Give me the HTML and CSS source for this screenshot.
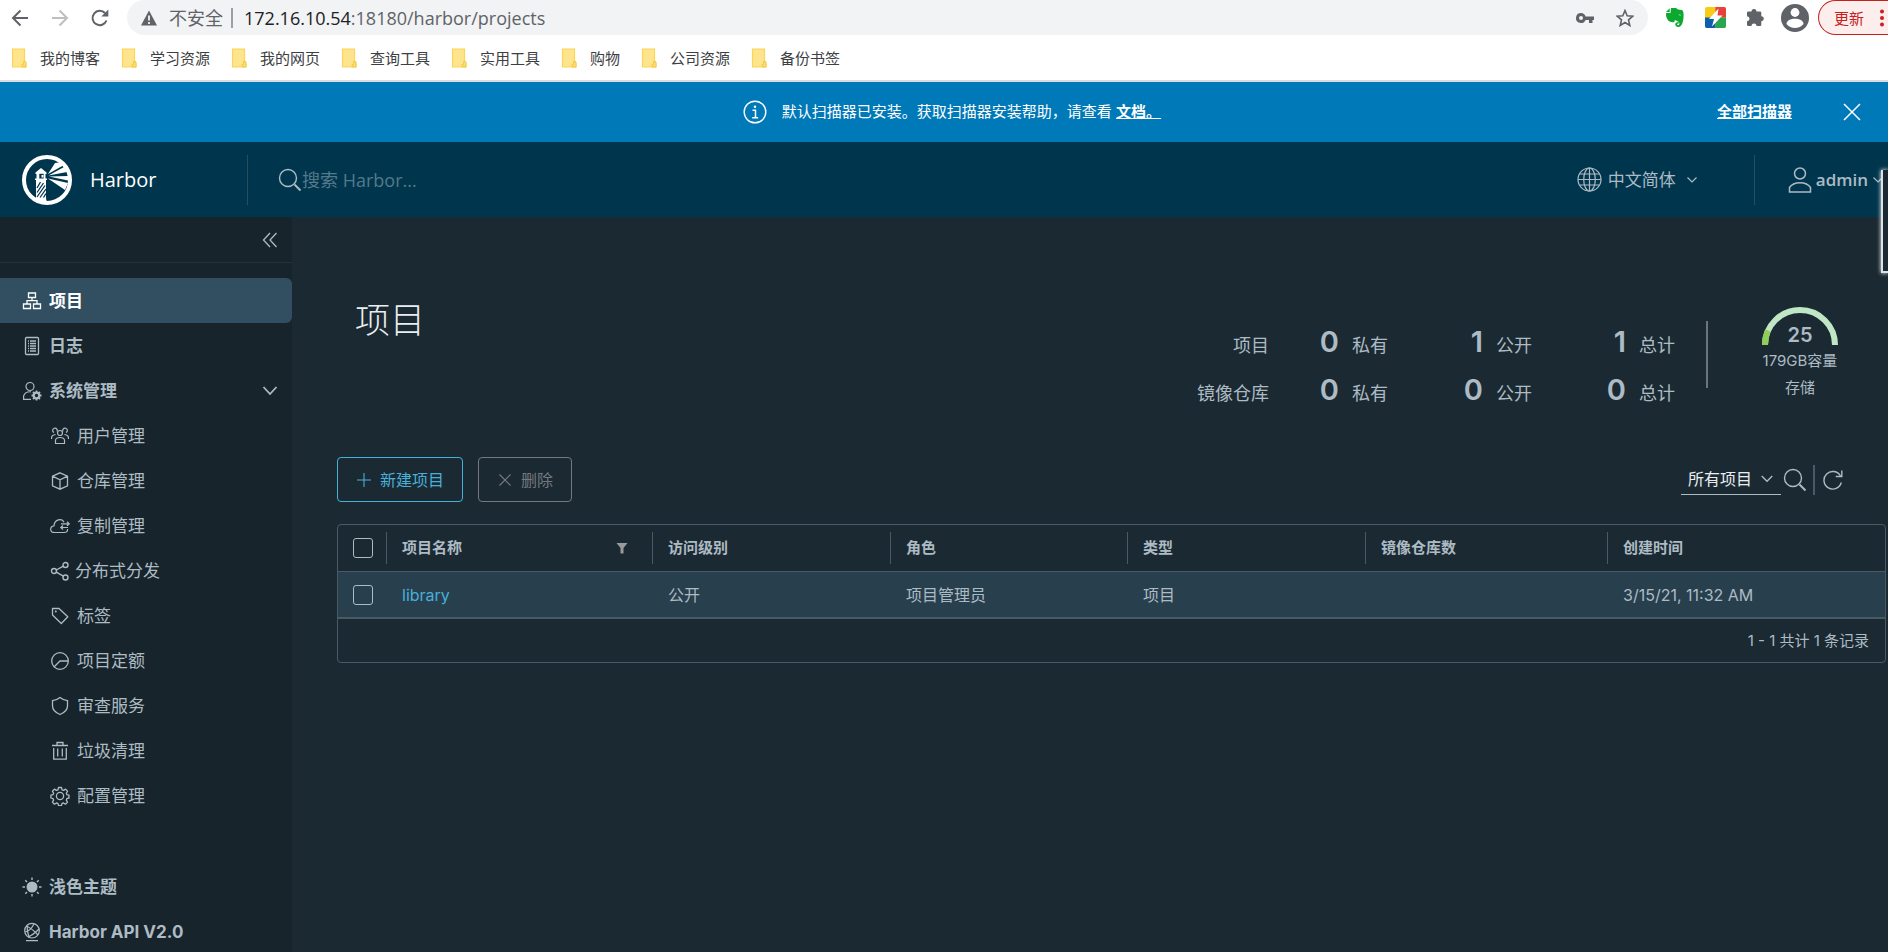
FILE: index.html
```html
<!DOCTYPE html>
<html lang="zh-CN">
<head>
<meta charset="utf-8">
<title>Harbor</title>
<link rel="stylesheet" href="styles.css">
</head>
<body>
<svg class="defs" width="0" height="0">
  <defs>
    <symbol id="folder" viewBox="0 0 16 20"><path d="M1.500 1h12v14.500h1.500v3.500h-13.500z" fill="#ffe48e" stroke="#fbd558" stroke-width="1.200"/><path d="M12.500 13.500h2.500v5.500h-4v-2.500h1.500z" fill="#fbdc6f" stroke="#f2c63c" stroke-width=".8"/></symbol>
    <symbol id="caret" viewBox="0 0 12 12"><path d="M1.500 3.500 6 8l4.500-4.500" fill="none" stroke="currentColor" stroke-width="1.200"/></symbol>
    <symbol id="search" viewBox="0 0 24 24"><circle cx="10" cy="10" r="8.500" fill="none" stroke="currentColor" stroke-width="1.400"/><path d="m16.500 16.500 6 6" stroke="currentColor" stroke-width="2"/></symbol>
  </defs>
</svg>

<header class="browser">
  <div class="address-row">
    <button class="nav-btn" aria-label="后退"><svg width="18" height="18" viewBox="0 0 18 18"><path d="M17 9H3M9.500 1.500 2 9l7.500 7.500" fill="none" stroke="#5f6368" stroke-width="2"/></svg></button>
    <button class="nav-btn" aria-label="前进"><svg width="18" height="18" viewBox="0 0 18 18"><path d="M1 9h14M8.500 1.500 16 9l-7.500 7.500" fill="none" stroke="#bdbfc2" stroke-width="2"/></svg></button>
    <button class="nav-btn" aria-label="刷新"><svg width="20" height="20" viewBox="0 0 20 20"><path d="M16.500 12.500A7.200 7.200 0 1 1 15 5" fill="none" stroke="#5f6368" stroke-width="2"/><path d="M18.300 1.500v7h-7z" fill="#5f6368"/></svg></button>
    <div class="omnibox">
      <svg width="16" height="16" viewBox="0 0 16 16"><path d="M8 .5 16 15.500H0z" fill="#5f6368"/><path d="M8 5.500v5M8 12v2" stroke="#f1f3f4" stroke-width="1.800"/></svg>
      <span class="insecure">不安全</span>
      <span class="url"><b>172.16.10.54</b>:18180/harbor/projects</span>
      <svg class="key" width="18" height="12" viewBox="0 0 18 12"><path d="M5 1a5 5 0 1 0 4.600 7H13v3h3.500V8H18V4.500H9.600A5 5 0 0 0 5 1zm0 3a2 2 0 1 1 0 4 2 2 0 0 1 0-4z" fill="#5f6368" fill-rule="evenodd"/></svg>
      <svg width="18" height="18" viewBox="0 0 18 18"><path d="m9 1.500 2.200 5.200 5.600.5-4.300 3.700 1.300 5.600L9 13.500l-4.800 3 1.300-5.600L1.200 7.200l5.600-.5z" fill="none" stroke="#5f6368" stroke-width="1.600"/></svg>
    </div>
    <div class="extensions">
      <svg width="20" height="21" viewBox="0 0 20 21"><path d="M6 1h5l2 1.500 4 .5c1.500 1 1.800 4 1.500 7.500-.3 4.500-1.500 9-5 9.500-2.500 0-3.500-1.500-3.200-3 .3-1.700 2-2 3.700-1.700l-.2 1.300c-1 0-1.700.2-1.600 1 0 .7 1 .8 1.600.5 1-.7.8-3-.8-3.600L10 13l-.8 2C5 16 2 13.500 1 8.500L1.200 6H5.500z" fill="#0da82f"/><path d="M1 5 4.700 1.300V5z" fill="#0da82f"/><path d="M13.500 8q1.500-1.300 2.600.6z" fill="#fff"/></svg>
      <svg width="21" height="21" viewBox="0 0 21 21"><rect width="21" height="21" rx="2" fill="#f8cb16"/><path d="M10.500 0H19q2 0 2 2v8.500H10.500z" fill="#e8413c"/><path d="M0 10.500h10.500V21H2q-2 0-2-2z" fill="#0c5fad"/><path d="M10.500 10.500H21V19q0 2-2 2h-8.500z" fill="#2aa650"/><path d="M13.500 1.500 4 12h5L7 19.500 17.500 8.500h-5z" fill="#fff"/></svg>
      <svg width="19" height="19" viewBox="0 0 19 19"><path d="M5.500 3.500a2.500 2.500 0 0 1 5 0H14a1.300 1.300 0 0 1 1.300 1.300v3.400a2.500 2.500 0 0 1 0 5v3.500A1.300 1.300 0 0 1 14 18h-3.500a2.500 2.500 0 0 0-5 0H2.300A1.300 1.300 0 0 1 1 16.700v-3.500a2.500 2.500 0 0 0 0-5V4.800a1.300 1.300 0 0 1 1.300-1.300z" fill="#5f6368"/></svg>
      <svg width="28" height="28" viewBox="0 0 28 28"><circle cx="14" cy="14" r="14" fill="#5f6368"/><circle cx="14" cy="8.500" r="4.400" fill="#fff"/><path d="M5.500 20c0-7 17-7 17 0a11 11 0 0 1-17 0z" fill="#fff"/></svg>
    </div>
    <button class="update"><span>更新</span><svg width="4" height="18" viewBox="0 0 4 18"><g fill="#c5221f"><circle cx="2" cy="2.500" r="2"/><circle cx="2" cy="9" r="2"/><circle cx="2" cy="15.500" r="2"/></g></svg></button>
  </div>
  <nav class="bookmarks">
    <a href="#"><svg width="16" height="20"><use href="#folder"/></svg>我的博客</a>
    <a href="#"><svg width="16" height="20"><use href="#folder"/></svg>学习资源</a>
    <a href="#"><svg width="16" height="20"><use href="#folder"/></svg>我的网页</a>
    <a href="#"><svg width="16" height="20"><use href="#folder"/></svg>查询工具</a>
    <a href="#"><svg width="16" height="20"><use href="#folder"/></svg>实用工具</a>
    <a href="#"><svg width="16" height="20"><use href="#folder"/></svg>购物</a>
    <a href="#"><svg width="16" height="20"><use href="#folder"/></svg>公司资源</a>
    <a href="#"><svg width="16" height="20"><use href="#folder"/></svg>备份书签</a>
  </nav>
</header>

<div class="alert">
  <div class="alert-text">
    <svg width="24" height="24" viewBox="0 0 24 24"><circle cx="12" cy="12" r="10.800" fill="none" stroke="#fff" stroke-width="1.400"/><circle cx="12" cy="6.700" r="1.200" fill="#fff"/><path d="M9.500 10.300H12.500v7.200M9.200 17.700h6" fill="none" stroke="#fff" stroke-width="1.500"/></svg>
    <p>默认扫描器已安装。获取扫描器安装帮助，请查看 <a href="#">文档。</a></p>
  </div>
  <a class="alert-link" href="#">全部扫描器</a>
  <button class="alert-close" aria-label="关闭"><svg width="18" height="18" viewBox="0 0 18 18"><path d="m1 1 16 16M17 1 1 17" stroke="#fff" stroke-width="1.500"/></svg></button>
</div>

<header class="app-header">
  <a class="brand" href="#">
    <svg width="50" height="50" viewBox="0 0 50 50"><circle cx="25" cy="25" r="23" fill="none" stroke="#fff" stroke-width="4"/><path d="M14 47V25h-1v-1.500h1.500V19h-1v-1.500L19 13l5.500 4.500V19h-1v4.500H25V25h-1v17q-.5 3 2 5.500Q19 49 14 47z" fill="#fff"/><path d="M17.300 18.800h4.400v4.700h-4.400z" fill="#00364d"/><path d="M19.500 20h2v2.500h-2z" fill="#fff"/><path d="m15 33 3.500-6M15 37.500 21.500 28M15 42l8-11.500M18 42.500 24 34M21.500 42.500 24 38.500" stroke="#00364d" stroke-width="1.300"/><path d="M26 19 33 8l7-1 2 3zM26.500 20.500 42 12l3 5zM27 21.500l19-.5v4.500zM26 23.500 46 28l-3 7z" fill="#fff"/></svg>
    <span>Harbor</span>
  </a>
  <label class="search"><svg width="24" height="24"><use href="#search"/></svg><input type="search" placeholder="搜索 Harbor..." aria-label="搜索 Harbor"></label>
  <button class="language"><svg width="25" height="25" viewBox="0 0 25 25"><g fill="none" stroke="currentColor" stroke-width="1.200"><circle cx="12.500" cy="12.500" r="11.500"/><ellipse cx="12.500" cy="12.500" rx="5.800" ry="11.500"/><path d="M12.500 1v23M1 12.500h23M2.800 7h19.400M2.800 18h19.400"/></g></svg><span>中文简体</span><svg class="caret" width="12" height="12"><use href="#caret"/></svg></button>
  <button class="user"><svg width="24" height="26" viewBox="0 0 24 26"><g fill="none" stroke="currentColor" stroke-width="1.500"><circle cx="12" cy="6.500" r="5.500"/><path d="M1.500 25v-4.500c4-6.500 17-6.500 21 0V25z"/></g></svg><span>admin</span><svg width="12" height="12"><use href="#caret"/></svg></button>
</header>

<div class="layout">
  <aside class="sidebar">
    <button class="collapse" aria-label="收起"><svg width="16" height="16" viewBox="0 0 16 16"><path d="M8 1 1.500 8 8 15M14.500 1 8 8l6.500 7" fill="none" stroke="currentColor" stroke-width="1.300"/></svg></button>
    <nav class="menu">
      <a class="item active" href="#"><svg width="20" height="20" viewBox="0 0 20 20"><g fill="none" stroke="currentColor" stroke-width="1.300"><path d="M6.500 2h7v4.500h-7zM1.500 13h7v4.500h-7zM11.500 13h7v4.500h-7zM10 6.500v3M5 13V9.700h10V13"/></g></svg>项目</a>
      <a class="item" href="#"><svg width="20" height="20" viewBox="0 0 20 20"><g fill="none" stroke="currentColor" stroke-width="1.300"><rect x="3.500" y="1.500" width="13" height="17" rx="1"/><path d="M6 5h1M8 5h6M6 7.500h1M8 7.500h6M6 10h1M8 10h6M6 12.500h1M8 12.500h6M6 15h1M8 15h6"/></g></svg>日志</a>
      <button class="item" aria-expanded="true"><svg width="20" height="20" viewBox="0 0 20 20"><g fill="none" stroke="currentColor" stroke-width="1.200"><circle cx="8" cy="5.500" r="4"/><path d="M9 18.400H1.600V15c.8-3 4-4.400 7.400-4.200"/><circle cx="14.500" cy="14.500" r="2.800" stroke-width="2.200"/><path d="M14.500 9.500v2M14.500 17.500v2M9.500 14.500h2M17.500 14.500h2M11 11l1.400 1.400M16.600 16.600 18 18M18 11l-1.400 1.400M12.400 16.600 11 18" stroke-width="1.800"/></g></svg><span>系统管理</span><svg class="expand" width="16" height="16" viewBox="0 0 16 16"><path d="m1.500 4 6.500 7 6.500-7" fill="none" stroke="currentColor" stroke-width="1.800"/></svg></button>
      <a class="sub" href="#"><svg width="20" height="20" viewBox="0 0 20 20"><g fill="none" stroke="currentColor" stroke-width="1.200"><circle cx="10" cy="7" r="2.500"/><path d="M5.500 17.500V14q.5-2.500 4.500-2.500t4.500 2.500v3.500zM7 5.500A2.300 2.300 0 1 0 4 6.500M13 5.500a2.300 2.300 0 1 1 3 1M1.600 13v-2q.4-2 4-2.500M18.400 13v-2q-.4-2-4-2.500"/></g></svg>用户管理</a>
      <a class="sub" href="#"><svg width="20" height="20" viewBox="0 0 20 20"><path d="m10 1.800 7.500 3.400v9.600L10 18.200l-7.500-3.400V5.200zM2.500 5.200 10 8.800l7.500-3.600M10 8.800v9.400" fill="none" stroke="currentColor" stroke-width="1.300"/></svg>仓库管理</a>
      <a class="sub" href="#"><svg width="20" height="20" viewBox="0 0 20 20"><path d="M17.500 13q.5 3.500-3.500 3.500H4.500C-.5 16.500-.5 10.500 4 9.800 4.500 3 12 2 14 6.300M11 7.800h8M17 5.800l2.200 2-2.200 2M18 11.500h-7M13 9.500l-2.200 2 2.200 2" fill="none" stroke="currentColor" stroke-width="1.200"/></svg>复制管理</a>
      <a class="sub tight" href="#"><svg width="20" height="20" viewBox="0 0 20 20"><g fill="none" stroke="currentColor" stroke-width="1.400"><circle cx="4" cy="10" r="2.500"/><circle cx="15.500" cy="4" r="2.500"/><circle cx="15.500" cy="16.500" r="2.500"/><path d="m6.300 9 7-3.800M6.300 11.200l7 4"/></g></svg>分布式分发</a>
      <a class="sub" href="#"><svg width="20" height="20" viewBox="0 0 20 20"><path d="M2.500 2.500H9l8.800 8.300-6.500 6.700L2.500 9z" fill="none" stroke="currentColor" stroke-width="1.300" stroke-linejoin="round"/><circle cx="5.800" cy="5.500" r="1" fill="currentColor"/></svg>标签</a>
      <a class="sub" href="#"><svg width="20" height="20" viewBox="0 0 20 20"><g fill="none" stroke="currentColor" stroke-width="1.300"><circle cx="10" cy="10" r="8.300"/><path d="M18 10h-8l-6 6"/></g></svg>项目定额</a>
      <a class="sub" href="#"><svg width="20" height="20" viewBox="0 0 20 20"><path d="M10 1.500q3.500 2.800 7.500 3.200V10c0 4-3.500 6.800-7.500 8.500C6 16.800 2.500 14 2.500 10V4.700Q6.500 4.300 10 1.500z" fill="none" stroke="currentColor" stroke-width="1.300"/></svg>审查服务</a>
      <a class="sub" href="#"><svg width="20" height="20" viewBox="0 0 20 20"><path d="M2 4.500h16M7 4.500v-3h6v3M3.700 7v11.200h12.600V7M7.700 7.500v8M12.300 7.500v8" fill="none" stroke="currentColor" stroke-width="1.300"/></svg>垃圾清理</a>
      <a class="sub" href="#"><svg width="20" height="20" viewBox="0 0 20 20"><g fill="none" stroke="currentColor" stroke-width="1.300" stroke-linejoin="round"><circle cx="10" cy="10" r="3.600"/><path d="M8.500 1.500h3l.5 2.300 1.500.6 2.100-1.300 2 2.100-1.300 2.100.6 1.400 2.100.5v2.800l-2.200.6-.5 1.500 1.200 2-2 2.100-2.200-1.300-1.400.7-.5 2.100H8.600l-.6-2.100-1.400-.7-2.200 1.300-2-2.100 1.200-2-.6-1.500-2.100-.6V9.200l2.100-.5.7-1.400-1.300-2.100 2-2.100 2.100 1.300L8 3.800z"/></g></svg>配置管理</a>
    </nav>
    <div class="menu-bottom">
      <button class="item"><svg width="20" height="20" viewBox="0 0 20 20"><circle cx="10" cy="10" r="5.500" fill="currentColor"/><path d="M10 .5V3M10 17v2.500M.5 10H3M17 10h2.500M3.300 3.300 5 5M15 15l1.700 1.700M16.700 3.300 15 5M5 15l-1.700 1.700" stroke="currentColor" stroke-width="1.400"/></svg>浅色主题</button>
      <a class="item" href="#"><svg width="20" height="20" viewBox="0 0 20 20"><g fill="none" stroke="currentColor" stroke-width="1.200"><circle cx="10" cy="8.700" r="7.300"/><path d="M4 4.500q4 0 12 8.500M3 10q5-.5 9-8M6 15q5-2 11-8M5.500 4q-1 5 2 11.500M4 18.700h12"/></g></svg>Harbor API V2.0</a>
    </div>
  </aside>

  <main class="content">
    <section class="summary">
      <h1>项目</h1>
      <div class="stats">
        <dl class="counts">
          <dt>项目</dt><dd><b>0</b>私有</dd><dd><b>1</b>公开</dd><dd><b>1</b>总计</dd>
          <dt>镜像仓库</dt><dd><b>0</b>私有</dd><dd><b>0</b>公开</dd><dd><b>0</b>总计</dd>
        </dl>
        <div class="storage">
          <div class="gauge">
            <svg width="76" height="38" viewBox="0 0 76 38"><path d="M3 38a35 35 0 0 1 70 0" fill="none" stroke="#c1e6c6" stroke-width="6"/><path d="M3 38a35 35 0 0 1 3-14.500" fill="none" stroke="#8fce58" stroke-width="6"/></svg>
            <b>25</b>
          </div>
          <span>179GB容量</span>
          <span>存储</span>
        </div>
      </div>
    </section>

    <div class="toolbar">
      <button class="btn primary"><svg width="16" height="16" viewBox="0 0 16 16"><path d="M8 1v14M1 8h14" stroke="currentColor" stroke-width="1.100"/></svg>新建项目</button>
      <button class="btn" disabled><svg width="16" height="16" viewBox="0 0 16 16"><path d="m2.500 2.500 11 11M13.500 2.500l-11 11" stroke="currentColor" stroke-width="1.200"/></svg>删除</button>
      <div class="filters">
        <div class="select"><select aria-label="项目类型"><option>所有项目</option></select><svg width="14" height="14"><use href="#caret"/></svg></div>
        <button class="icon-btn" aria-label="搜索"><svg width="24" height="24"><use href="#search"/></svg></button>
        <button class="icon-btn refresh" aria-label="刷新"><svg width="20" height="20" viewBox="0 0 20 20"><path d="M18.300 12.500A8.800 8.800 0 1 1 17.500 6" fill="none" stroke="currentColor" stroke-width="1.400"/><path d="M18.800.5v6h-6" fill="none" stroke="currentColor" stroke-width="1.400"/></svg></button>
      </div>
    </div>

    <table class="grid">
      <colgroup><col class="c-check"><col class="c-name"><col class="c-access"><col class="c-role"><col class="c-type"><col class="c-repos"><col></colgroup>
      <thead>
        <tr>
          <th><input type="checkbox" aria-label="全选"></th>
          <th><div class="head">项目名称<svg width="12" height="12" viewBox="0 0 12 12"><path d="M.5 1h11L7.500 6v5.500h-3V6z" fill="#9a9a9a"/></svg></div></th>
          <th><div class="head">访问级别</div></th>
          <th><div class="head">角色</div></th>
          <th><div class="head">类型</div></th>
          <th><div class="head">镜像仓库数</div></th>
          <th><div class="head">创建时间</div></th>
        </tr>
      </thead>
      <tbody>
        <tr>
          <td><input type="checkbox" aria-label="选择 library"></td>
          <td><a href="#">library</a></td>
          <td>公开</td>
          <td>项目管理员</td>
          <td>项目</td>
          <td></td>
          <td>3/15/21, 11:32 AM</td>
        </tr>
      </tbody>
      <tfoot><tr><td colspan="7">1 - 1 共计 1 条记录</td></tr></tfoot>
    </table>
  </main>
</div>
<div class="edge-panel"></div>
</body>
</html>
```
FILE: styles.css
```css
* { box-sizing: border-box; }

body {
  margin: 0;
  min-height: 100vh;
  display: flex;
  flex-direction: column;
  overflow-x: hidden;
  background: #1b2a32;
  color: #adbbc4;
  font-family: Inter, "Noto Sans CJK SC", sans-serif;
  font-size: 16px;
  line-height: 24px;
}

button, input, select { font: inherit; color: inherit; }
button { padding: 0; border: 0; background: none; cursor: pointer; }
a { color: inherit; text-decoration: none; }
svg { display: block; flex: none; }
.defs { position: absolute; }

/* Browser bar */
.browser {
  background: #fff;
  border-bottom: 2px solid #dadce0;
  height: 82px;
  font-family: "Open Sans", "Noto Sans CJK SC", sans-serif;
  color: #3c4043;
}
.address-row { display: flex; align-items: center; height: 35px; }
.nav-btn { width: 40px; display: grid; place-items: center; }
.omnibox {
  flex: 1;
  display: flex;
  align-items: center;
  height: 35px;
  margin-left: 7px;
  padding: 0 14px;
  border-radius: 18px;
  background: #f1f3f4;
  color: #5f6368;
  font-size: 18px;
}
.insecure { margin-left: 12px; padding-right: 8px; border-right: 2px solid #9aa0a6; line-height: 20px; }
.url { flex: 1; margin-left: 11px; }
.url b { color: #202124; font-weight: 400; }
.key { margin-right: 22px; }
.extensions { display: flex; align-items: center; gap: 20px; margin-left: 17px; }
.extensions svg:last-child { margin-left: -4px; }
.update {
  display: flex;
  align-items: center;
  gap: 16px;
  height: 35px;
  width: 70px;
  padding-left: 15px;
  margin-left: 9px;
  border: 1px solid #c5221f;
  border-right: 0;
  border-radius: 18px 0 0 18px;
  background: #fceeed;
  color: #c5221f;
  font-size: 15px;
}
.bookmarks { display: flex; gap: 21px; padding: 11px; font-size: 15px; }
.bookmarks a { display: flex; align-items: center; gap: 13px; }

/* Alert */
.alert {
  display: flex;
  align-items: center;
  height: 60px;
  padding-right: 27px;
  background: #0079b8;
  color: #fff;
  font-size: 15px;
}
.alert-text { flex: 1; display: flex; align-items: center; justify-content: center; gap: 15px; padding-left: 187px; }
.alert p { margin: 0; }
.alert a { font-weight: 700; text-decoration: underline; }
.alert-link { margin-right: 51px; }

/* Application header */
.app-header {
  display: flex;
  align-items: center;
  height: 75px;
  background: #00364d;
  font-family: "Open Sans", "Noto Sans CJK SC", sans-serif;
}
.brand { display: flex; align-items: center; gap: 18px; width: 248px; height: 50px; padding-left: 22px; border-right: 1px solid #23505f; color: #fff; font-size: 20px; }
.search { flex: 1; display: flex; align-items: center; margin-left: 30px; color: #adbbc4; }
.search input { border: 0; padding: 0; background: none; outline: 0; width: 300px; font-size: 18px; }
.search input::placeholder { color: #55788a; opacity: 1; }
.language { display: flex; align-items: center; height: 50px; padding-right: 56px; border-right: 1px solid #23505f; font-size: 17px; }
.language span { margin: 0 10px 0 6px; }
.user { display: flex; align-items: center; gap: 4px; padding: 0 4px 0 33px; font-size: 17px; font-weight: 600; }

/* Sidebar */
.layout { flex: 1; display: flex; }
.sidebar { flex: none; width: 292px; background: #17242b; }
.collapse { display: flex; justify-content: flex-end; align-items: center; width: 100%; height: 46px; padding-right: 14px; border-bottom: 1px solid #24323a; }
.menu { padding-top: 15px; }
.menu-bottom { margin-top: 46px; }
.item, .sub { display: flex; align-items: center; height: 45px; width: 100%; font-size: 17px; }
.item { gap: 7px; padding: 0 14px 0 22px; font-weight: 700; }
.item.active { background: #324f61; color: #fff; border-radius: 0 6px 6px 0; }
.expand { margin-left: auto; }
.sub { gap: 7px; padding-left: 50px; }
.sub.tight { gap: 5px; }

/* Content */
.content { flex: 1; min-width: 0; padding: 64px 2px 0 45px; }
.summary { display: flex; justify-content: space-between; height: 176px; }
h1 { margin: 15px 0 0 18px; color: #eaedf0; font-size: 35px; font-weight: 300; line-height: 48px; }
.stats { display: flex; align-items: flex-start; padding-right: 48px; }
.counts {
  display: grid;
  grid-template-columns: 72px 119px 144px 143px;
  align-items: baseline;
  row-gap: 16px;
  margin: 49px 31px 0 0;
  font-size: 18px;
  line-height: 32px;
}
.counts dt { text-align: right; }
.counts dd { display: flex; justify-content: flex-end; align-items: baseline; gap: 13px; margin: 0; }
.counts b { font-size: 29px; font-weight: 600; line-height: 24px; }
.storage { display: flex; flex-direction: column; align-items: center; margin-top: 26px; font-size: 15px; line-height: 27px; position: relative; padding-left: 56px; }
.storage::before { content: ""; position: absolute; left: 0; top: 14px; height: 67px; width: 2px; background: #6b757b; }
.gauge { display: grid; justify-items: center; align-items: end; margin-bottom: 2px; }
.gauge > * { grid-area: 1 / 1; }
.gauge b { font-size: 20px; font-weight: 600; line-height: 20px; }

/* Toolbar */
.toolbar { display: flex; gap: 15px; }
.btn { display: flex; align-items: center; gap: 8px; height: 45px; padding: 0 18px; border: 1px solid #73797e; border-radius: 4px; color: #73797e; font-size: 16px; }
.btn.primary { border-color: #49afd9; color: #49afd9; }
.filters { display: flex; align-items: center; margin-left: auto; padding-right: 43px; }
.select { display: flex; align-items: center; width: 100px; height: 30px; border-bottom: 1px solid #adbbc4; }
.select select { flex: 1; min-width: 0; padding-left: 7px; border: 0; background: none; appearance: none; color: #eaedf0; font-size: 16px; }
.select svg { margin-right: 7px; }
.icon-btn { margin-left: 2px; }
.refresh { display: flex; align-items: center; height: 30px; margin-left: 6px; padding-left: 8px; border-left: 2px solid #485969; }

/* Data grid */
.grid { width: 100%; margin-top: 22px; table-layout: fixed; border: 1px solid #495a67; border-radius: 4px; border-spacing: 0; }
.c-check { width: 48px; }
.c-name { width: 266px; }
.c-access, .c-type { width: 238px; }
.c-role { width: 237px; }
.c-repos { width: 242px; }
th, td { padding: 0 16px; height: 47px; text-align: left; }
th { padding-left: 0; border-bottom: 1px solid #495a67; font-size: 15px; font-weight: 700; }
.head { display: flex; justify-content: space-between; align-items: center; height: 32px; padding-left: 15px; border-left: 1px solid #495a67; }
.head svg { margin-right: 8px; }
tbody td { background: #283f4e; font-size: 16px; border-bottom: 2px solid #495a67; }
tbody a { color: #49afd9; }
.grid input { appearance: none; display: block; width: 20px; height: 20px; margin: 0 0 0 15px; border: 1px solid #adbbc4; border-radius: 3px; }
tbody td:first-child { padding: 0; }
tfoot td { height: 43px; text-align: right; font-size: 15px; }

/* Panel peeking in from the right edge */
.edge-panel { position: absolute; right: 0; top: 170px; width: 7px; height: 103px; border: 2px solid #dfe2e4; border-width: 0 0 2px 2px; background: #1b2a32; box-shadow: 0 0 4px #fff; }
```
